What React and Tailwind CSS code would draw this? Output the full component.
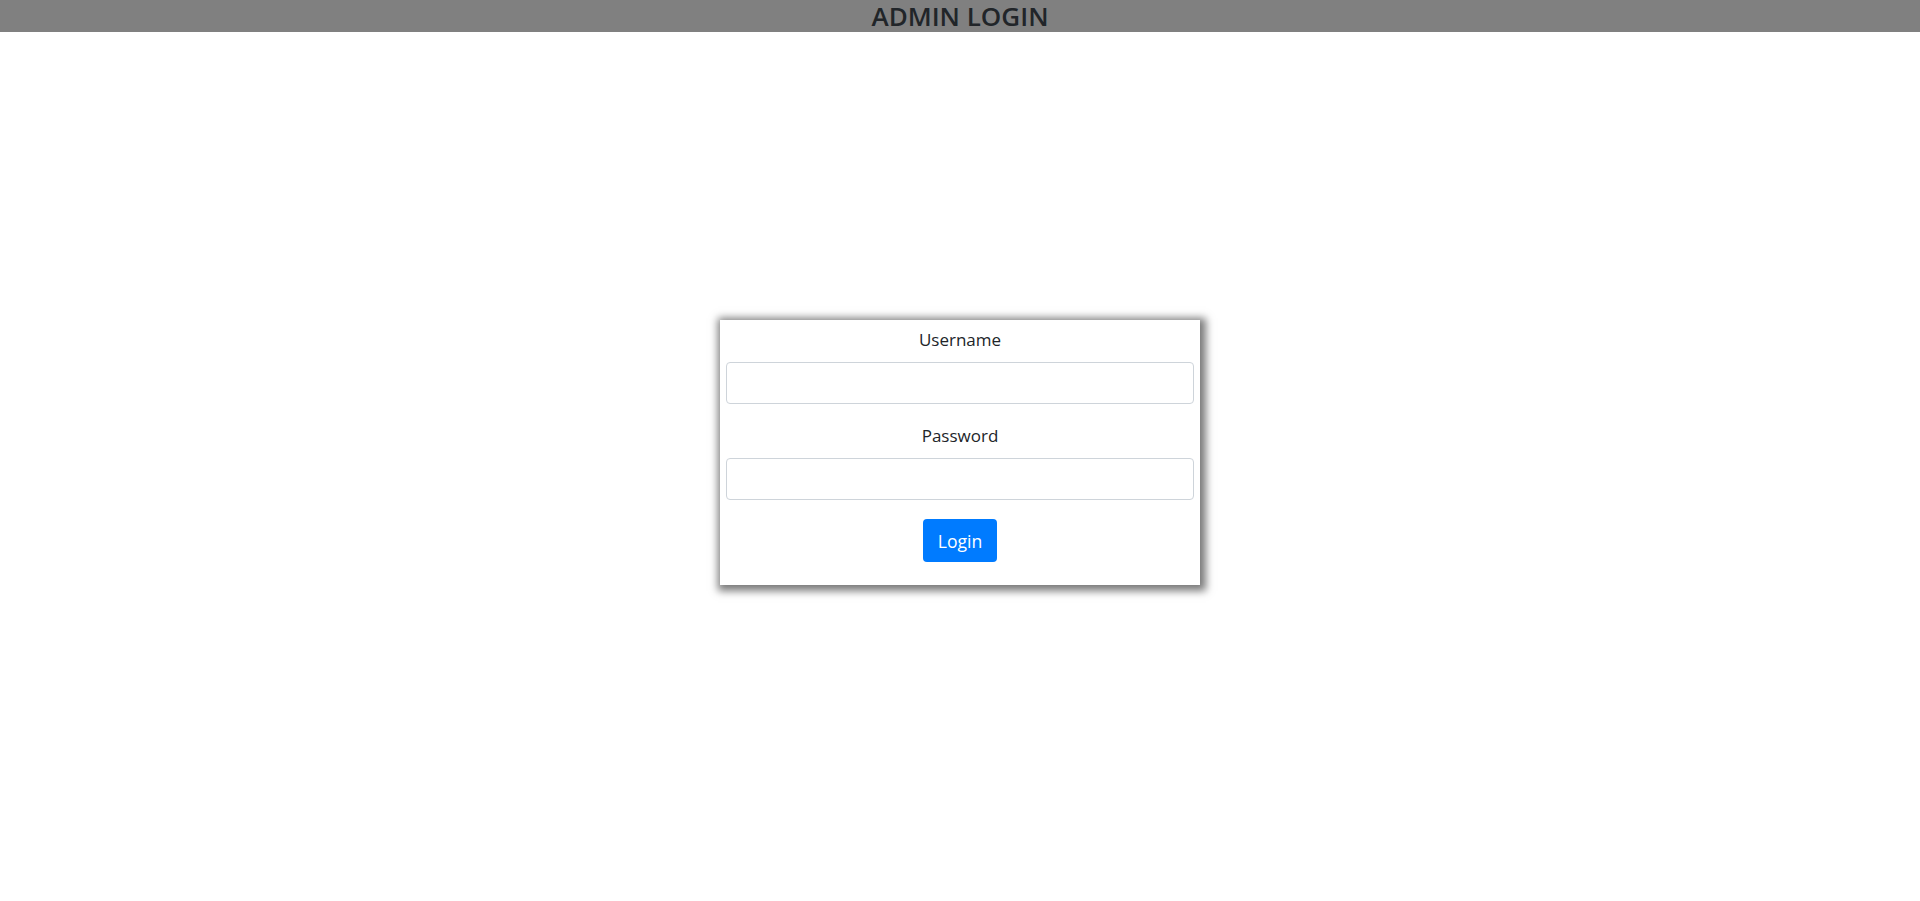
import React, { useState } from 'react';

export default function App() {
    const [username, setUsername] = useState('');
    const [password, setPassword] = useState('');

    return (
        <div className="min-h-screen bg-white text-[#212529] font-['Open_Sans','Noto_Sans',sans-serif]">
            {/* Header */}
            <div className="h-[32px] bg-[#808080] flex items-center justify-center">
                <h4 className="text-[26px] leading-[32px] font-semibold text-[#212529]">ADMIN LOGIN</h4>
            </div>

            {/* Login card */}
            <div className="flex justify-center pt-[288px]">
                <form
                    onSubmit={(e) => e.preventDefault()}
                    className="w-[480px] bg-white pt-[7px] px-[6px] pb-[5px] shadow-[2px_2px_8px_4px_#7a7a7a]"
                >
                    <div className="mb-[19px] flex flex-col">
                        <label className="text-center text-[17px] leading-[26px] mb-[9px]">Username</label>
                        <input
                            type="text"
                            value={username}
                            onChange={(e) => setUsername(e.target.value)}
                            className="h-[42px] w-full rounded-[4px] border border-[#ced4da] px-3 text-[17px] outline-none"
                        />
                    </div>
                    <div className="mb-[19px] flex flex-col">
                        <label className="text-center text-[17px] leading-[26px] mb-[9px]">Password</label>
                        <input
                            type="password"
                            value={password}
                            onChange={(e) => setPassword(e.target.value)}
                            className="h-[42px] w-full rounded-[4px] border border-[#ced4da] px-3 text-[17px] outline-none"
                        />
                    </div>
                    <div className="flex justify-center mb-[18px]">
                        <button
                            type="submit"
                            className="h-[43px] w-[74px] rounded-[4px] bg-[#007bff] text-white text-[17.6px] leading-[26px]"
                        >
                            Login
                        </button>
                    </div>
                </form>
            </div>
        </div>
    );
}
